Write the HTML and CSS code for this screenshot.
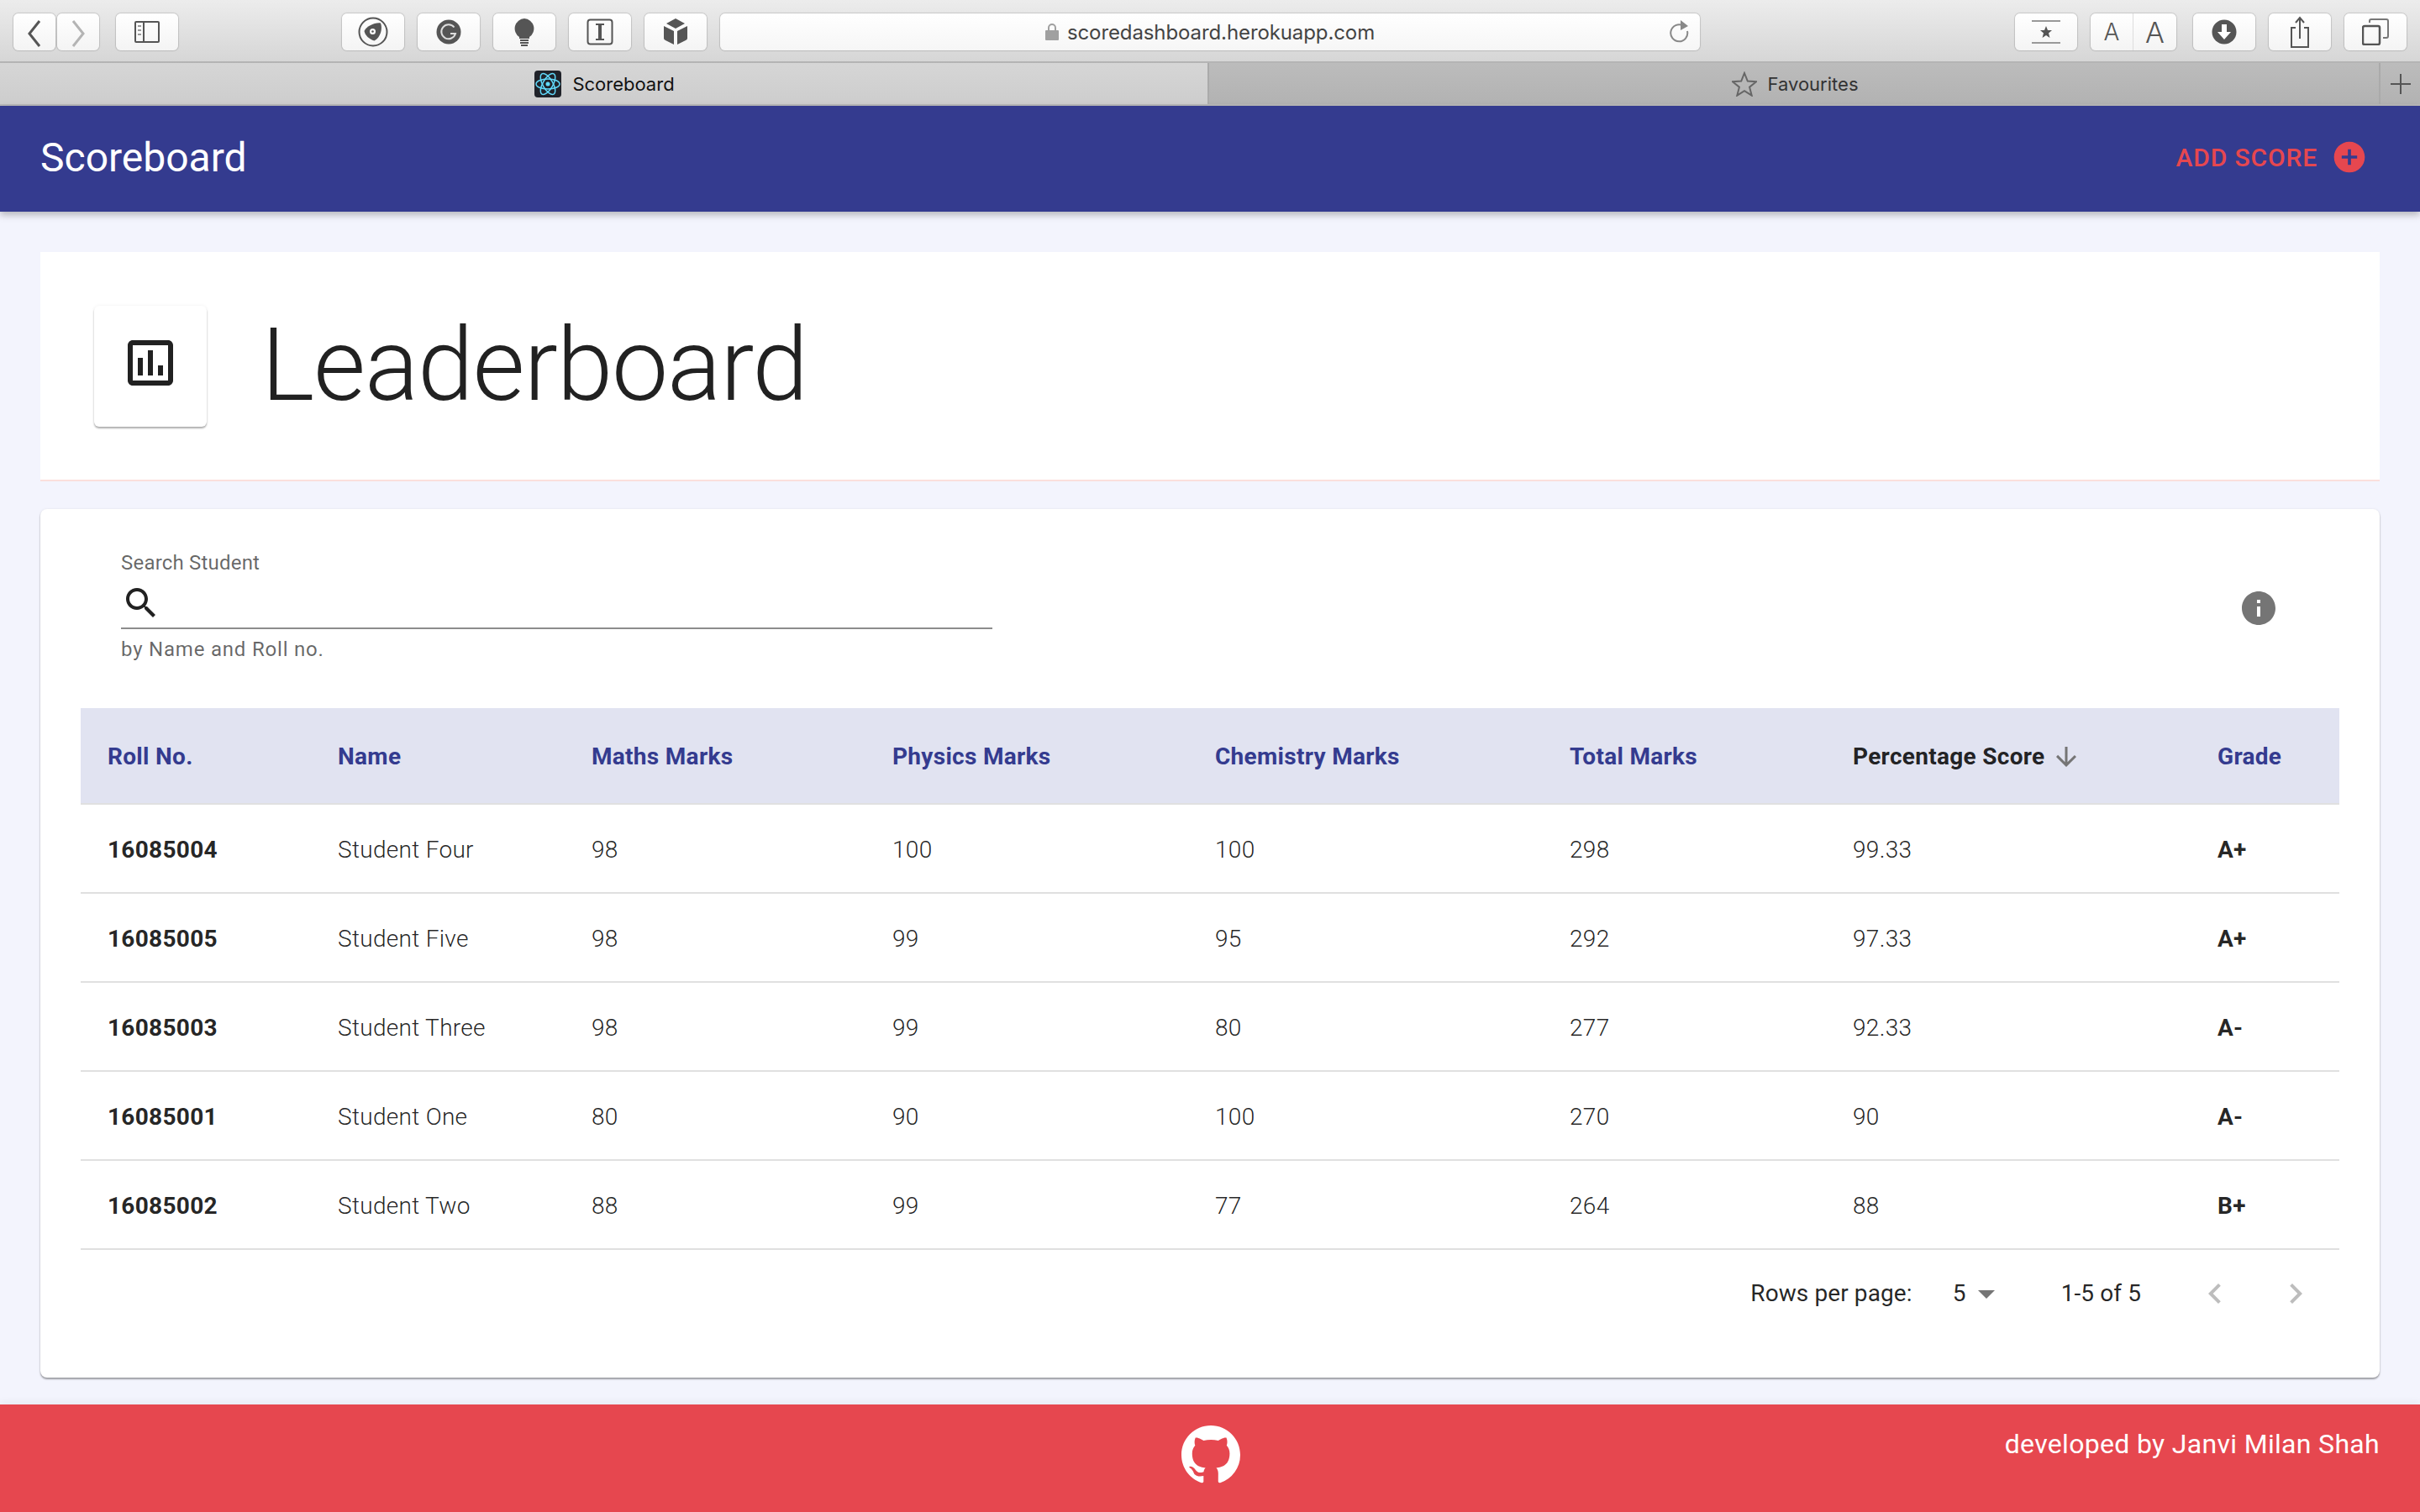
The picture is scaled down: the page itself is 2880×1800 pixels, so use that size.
FILE: index.html
```html
<!DOCTYPE html>
<html lang="en">
    <head>
        <meta charset="UTF-8" />
        <title>Scoreboard</title>
        <link rel="stylesheet" href="styles.css">
    </head>
    <body>
        <div class="toolbar">
            <div class="btn-split">
                <div class="btn btn-nav"><svg width="24" height="44" viewBox="0 0 24 44"><path d="M18 9L6 24l12 15" fill="none" stroke="#555" stroke-width="3"/></svg></div>
                <div class="btn btn-nav"><svg width="24" height="44" viewBox="0 0 24 44"><path d="M6 9l12 15L6 39" fill="none" stroke="#b4b4b4" stroke-width="3"/></svg></div>
            </div>
            <div class="btn btn-wide btn-sidebar"><svg width="30" height="26" viewBox="0 0 30 26"><rect x="1" y="1" width="28" height="24" rx="1" fill="none" stroke="#555" stroke-width="2"/><path d="M11 1v24" stroke="#555" stroke-width="2"/><path d="M4 6h4M4 11h4M4 16h4" stroke="#999" stroke-width="2"/></svg></div>
            <div class="ext-group">
                <div class="btn btn-wide"><svg width="36" height="36" viewBox="0 0 36 36"><circle cx="18" cy="18" r="16.5" fill="none" stroke="#555" stroke-width="2"/><path d="M7.500 17C10 11.500 20 6.500 27 7.500 29.500 14 27 24.500 19.500 28.500 13 26.500 8.500 22 7.500 17z" fill="#555"/><circle cx="17.500" cy="17.500" r="3.500" fill="#fff"/><circle cx="17.500" cy="17.500" r="1.300" fill="#555"/></svg></div>
                <div class="btn btn-wide"><svg width="30" height="30" viewBox="0 0 30 30"><circle cx="15" cy="15" r="14.5" fill="#555"/><path d="M21.500 9.500a8.500 8.500 0 1 0 1.500 7.500h-6" fill="none" stroke="#ddd" stroke-width="2"/></svg></div>
                <div class="btn btn-wide"><svg width="26" height="34" viewBox="0 0 26 34"><path d="M13 1a12 12 0 0 0-6 22v2h12v-2a12 12 0 0 0-6-22z" fill="#555"/><path d="M8 27h10M8 30h10M9 33h8" stroke="#555" stroke-width="2"/></svg></div>
                <div class="btn btn-wide"><svg width="32" height="32" viewBox="0 0 32 32"><rect x="1.5" y="1.5" width="29" height="29" rx="3" fill="none" stroke="#555" stroke-width="2"/><path d="M11 7h10M11 25h10" stroke="#555" stroke-width="2"/><path d="M16 7v18" stroke="#555" stroke-width="4"/></svg></div>
                <div class="btn btn-wide"><svg width="30" height="32" viewBox="0 0 30 32"><path d="M15 0l11 6-11 6L4 6z" fill="#555"/><path d="M1 9l12 6v16L3 26c-2-1-2-2-2-3z" fill="#555"/><path d="M29 9l-12 6v16l10-5c2-1 2-2 2-3z" fill="#555"/></svg></div>
            </div>
            <div class="url-bar">
                <svg class="lock" width="16" height="20" viewBox="0 0 16 20"><path d="M4 9V5a4 4 0 0 1 8 0v4" fill="none" stroke="#a0a0a0" stroke-width="2"/><rect y="8" width="16" height="12" rx="1" fill="#a0a0a0"/></svg>
                <span>scoredashboard.herokuapp.com</span>
                <svg class="reload" width="24" height="28" viewBox="0 0 24 28"><path d="M16 6.5A10 10 0 1 0 21 13" fill="none" stroke="#888" stroke-width="2"/><path d="M13 0l9 7-9 5z" fill="#888"/></svg>
            </div>
            <div class="btn btn-wide"><svg width="34" height="28" viewBox="0 0 34 28"><path d="M0 1h34M0 27h34" stroke="#999" stroke-width="2"/><path d="M17 7l2 5h5l-4 3.500 1.500 5.500-4.500-3-4.500 3L14 15.500 10 12h5z" fill="#555"/></svg></div>
            <div class="btn-text">
                <span class="btn-a-small">A</span>
                <span class="btn-a-big">A</span>
            </div>
            <div class="btn btn-wide"><svg width="30" height="30" viewBox="0 0 30 30"><circle cx="15" cy="15" r="14.500" fill="#555"/><path d="M12 6h6v9h5l-8 9-8-9h5z" fill="#fff"/></svg></div>
            <div class="btn btn-wide"><svg width="24" height="38" viewBox="0 0 24 38"><path d="M7 14H2v23h20V14h-5" fill="none" stroke="#555" stroke-width="2"/><path d="M12 27V3M7 8l5-6 5 6" fill="none" stroke="#555" stroke-width="2"/></svg></div>
            <div class="btn btn-wide"><svg width="32" height="32" viewBox="0 0 32 32"><rect x="1" y="9" width="20" height="22" rx="2" fill="none" stroke="#555" stroke-width="2.500"/><path d="M9 5V3c0-1 1-2 2-2h18c1 0 2 1 2 2v18c0 1-1 2-2 2h-4" fill="none" stroke="#777" stroke-width="2"/></svg></div>
        </div>

        <div class="tabbar">
            <div class="tab tab-active">
                <svg width="32" height="32" viewBox="0 0 32 32"><rect width="32" height="32" rx="4" fill="#20232a"/><g fill="none" stroke="#61dafb" stroke-width="1.500"><ellipse cx="16" cy="16" rx="14" ry="6"/><ellipse cx="16" cy="16" rx="14" ry="6" transform="rotate(60 16 16)"/><ellipse cx="16" cy="16" rx="14" ry="6" transform="rotate(120 16 16)"/></g><circle cx="16" cy="16" r="2.500" fill="#61dafb"/></svg>
                <span>Scoreboard</span>
            </div>
            <div class="tab tab-off">
                <svg width="30" height="30" viewBox="0 0 30 30"><path d="M15 2l3.800 9.500 10.200.7-7.900 6.500 2.600 10-8.700-5.500-8.700 5.500 2.600-10L1 12.200l10.200-.7z" fill="none" stroke="#666" stroke-width="2"/></svg>
                <span>Favourites</span>
            </div>
            <div class="tab-add"><svg width="24" height="24" viewBox="0 0 24 24"><path d="M12 0v24M0 12h24" stroke="#555" stroke-width="2"/></svg></div>
        </div>

        <header class="appbar">
            <div class="appbar-title">Scoreboard</div>
            <div class="add-score">
                <span>ADD SCORE</span>
                <svg width="44" height="44" viewBox="0 0 24 24"><path d="M12 2C6.480 2 2 6.480 2 12s4.480 10 10 10 10-4.480 10-10S17.520 2 12 2zm5 11h-4v4h-2v-4H7v-2h4V7h2v4h4v2z"/></svg>
            </div>
        </header>

        <main class="content">
            <section class="page-head">
                <div class="head-icon">
                    <svg width="72" height="72" viewBox="0 0 24 24"><path d="M19 3H5c-1.100 0-2 .9-2 2v14c0 1.100.9 2 2 2h14c1.100 0 2-.9 2-2V5c0-1.100-.9-2-2-2zm0 16H5V5h14v14zM7 10h2v7H7zm4-3h2v10h-2zm4 6h2v4h-2z"/></svg>
                </div>
                <h1>Leaderboard</h1>
            </section>

            <section class="card">
                <div class="search-row">
                    <div class="search">
                        <label>Search Student</label>
                        <div class="search-input">
                            <svg width="48" height="48" viewBox="0 0 24 24"><path d="M15.500 14h-.79l-.28-.27C15.410 12.590 16 11.110 16 9.500 16 5.910 13.090 3 9.500 3S3 5.910 3 9.500 5.910 16 9.500 16c1.610 0 3.090-.59 4.230-1.570l.27.28v.79l5 4.990L20.490 19l-4.990-5zm-6 0C7.010 14 5 11.990 5 9.500S7.010 5 9.500 5 14 7.010 14 9.500 11.990 14 9.500 14z"/></svg>
                        </div>
                        <p>by Name and Roll no.</p>
                    </div>
                    <svg class="info" width="48" height="48" viewBox="0 0 24 24"><path d="M12 2C6.480 2 2 6.480 2 12s4.480 10 10 10 10-4.480 10-10S17.520 2 12 2zm1 15h-2v-6h2v6zm0-8h-2V7h2v2z"/></svg>
                </div>

                <table>
                    <colgroup>
                        <col class="c-roll"><col class="c-name"><col class="c-maths"><col class="c-phys"><col class="c-chem"><col class="c-total"><col class="c-perc"><col class="c-grade">
                    </colgroup>
                    <thead>
                        <tr>
                            <th>Roll No.</th>
                            <th>Name</th>
                            <th>Maths Marks</th>
                            <th>Physics Marks</th>
                            <th>Chemistry Marks</th>
                            <th>Total Marks</th>
                            <th class="sorted">Percentage Score <svg width="36" height="36" viewBox="0 0 24 24"><path d="M20 12l-1.410-1.410L13 16.170V4h-2v12.170l-5.580-5.590L4 12l8 8 8-8z"/></svg></th>
                            <th>Grade</th>
                        </tr>
                    </thead>
                    <tbody>
                        <tr><td class="strong">16085004</td><td>Student Four</td><td>98</td><td>100</td><td>100</td><td>298</td><td>99.33</td><td class="strong">A+</td></tr>
                        <tr><td class="strong">16085005</td><td>Student Five</td><td>98</td><td>99</td><td>95</td><td>292</td><td>97.33</td><td class="strong">A+</td></tr>
                        <tr><td class="strong">16085003</td><td>Student Three</td><td>98</td><td>99</td><td>80</td><td>277</td><td>92.33</td><td class="strong">A-</td></tr>
                        <tr><td class="strong">16085001</td><td>Student One</td><td>80</td><td>90</td><td>100</td><td>270</td><td>90</td><td class="strong">A-</td></tr>
                        <tr><td class="strong">16085002</td><td>Student Two</td><td>88</td><td>99</td><td>77</td><td>264</td><td>88</td><td class="strong">B+</td></tr>
                    </tbody>
                </table>

                <div class="pagination">
                    <span class="rows-label">Rows per page:</span>
                    <span class="rows-select">5<svg width="48" height="48" viewBox="0 0 24 24"><path d="M7 10l5 5 5-5z"/></svg></span>
                    <span class="range">1-5 of 5</span>
                    <svg class="pager" width="48" height="48" viewBox="0 0 24 24"><path d="M15.410 7.410L14 6l-6 6 6 6 1.410-1.410L10.830 12z"/></svg>
                    <svg class="pager" width="48" height="48" viewBox="0 0 24 24"><path d="M10 6L8.590 7.410 13.170 12l-4.580 4.590L10 18l6-6z"/></svg>
                </div>
            </section>
        </main>

        <footer class="footer">
            <div></div>
            <svg class="github" width="70" height="70" viewBox="0 0 16 16"><path d="M8 0C3.580 0 0 3.580 0 8c0 3.540 2.290 6.530 5.470 7.590.4.070.55-.17.55-.38 0-.19-.01-.82-.01-1.490-2.010.37-2.530-.49-2.690-.94-.09-.23-.48-.94-.82-1.130-.28-.15-.68-.52-.01-.53.63-.01 1.080.58 1.230.82.72 1.210 1.870.87 2.330.66.070-.52.28-.87.51-1.070-1.780-.2-3.640-.89-3.640-3.950 0-.87.31-1.590.82-2.150-.08-.2-.36-1.020.08-2.120 0 0 .67-.21 2.200.82.64-.18 1.320-.27 2-.27.68 0 1.360.09 2 .27 1.530-1.040 2.200-.82 2.200-.82.44 1.100.16 1.920.08 2.120.51.56.82 1.270.82 2.150 0 3.070-1.870 3.750-3.650 3.950.29.25.54.73.54 1.480 0 1.070-.01 1.930-.01 2.200 0 .21.15.46.55.38A8.013 8.013 0 0016 8c0-4.420-3.580-8-8-8z"/></svg>
            <div class="credit">developed by Janvi Milan Shah</div>
        </footer>
    </body>
</html>
```
FILE: styles.css
```css
* {
    box-sizing: border-box;
}
body {
    font-family: Roboto, sans-serif;
    background-color: #f3f4fd;
    margin: 0;
    height: 1800px;
    display: flex;
    flex-direction: column;
    overflow: hidden;
    color: rgba(0, 0, 0, 0.87);
}

/* browser chrome */
.toolbar {
    height: 75px;
    flex: none;
    display: flex;
    align-items: flex-start;
    padding: 16px 0 0 16px;
    background: linear-gradient(#ececec, #d6d6d6);
    border-bottom: 2px solid #b4b4b4;
}
.btn {
    height: 44px;
    flex: none;
    display: flex;
    align-items: center;
    justify-content: center;
    background: linear-gradient(#ffffff, #f4f4f4);
    border-radius: 6px;
    box-shadow: 0 0 1px 1px rgba(0, 0, 0, 0.14);
}
.btn-wide {
    width: 74px;
}
.btn-split {
    display: flex;
    flex: none;
    gap: 2px;
}
.btn-nav {
    width: 50px;
}
.btn-sidebar {
    margin-left: 20px;
}
.ext-group {
    display: flex;
    flex: none;
    gap: 16px;
    margin-left: 195px;
}
.url-bar {
    width: 1166px;
    height: 44px;
    flex: none;
    margin: 0 375px 0 16px;
    display: flex;
    align-items: center;
    justify-content: center;
    gap: 10px;
    position: relative;
    font-family: Inter, sans-serif;
    font-size: 24px;
    letter-spacing: -0.1px;
    color: #444;
    background: linear-gradient(#ffffff, #f6f6f6);
    border-radius: 6px;
    box-shadow: 0 0 1px 1px rgba(0, 0, 0, 0.14);
}
.reload {
    position: absolute;
    right: 12px;
    top: 8px;
}
.btn-text {
    width: 102px;
    height: 44px;
    flex: none;
    margin: 0 20px 0 16px;
    display: flex;
    background: linear-gradient(#ffffff, #f4f4f4);
    border-radius: 6px;
    box-shadow: 0 0 1px 1px rgba(0, 0, 0, 0.14);
    font-family: Inter, sans-serif;
    font-weight: 300;
    color: #555;
}
.btn-text span {
    display: flex;
    align-items: center;
    justify-content: center;
}
.btn-a-small {
    width: 51px;
    font-size: 28px;
    border-right: 1px solid #ddd;
}
.btn-a-big {
    width: 51px;
    font-size: 34px;
}
.btn-text + .btn,
.btn-text + .btn + .btn {
    margin-right: 16px;
}
.tabbar {
    height: 51px;
    flex: none;
    display: flex;
    font-family: Inter, sans-serif;
    font-size: 22px;
    border-bottom: 2px solid #b8b8b8;
}
.tab {
    display: flex;
    align-items: center;
    justify-content: center;
    gap: 13px;
    padding-left: 2px;
}
.tab-active {
    width: 1439px;
    color: #111;
    background: linear-gradient(#d6d6d6, #cdcdcd);
    border-right: 2px solid #aaa;
}
.tab-off {
    flex: 1;
    color: #333;
    background: linear-gradient(#bcbcbc, #b2b2b2);
}
.tab-add {
    width: 49px;
    display: flex;
    align-items: center;
    justify-content: center;
    background: linear-gradient(#bcbcbc, #b2b2b2);
    border-left: 2px solid #aaa;
}

/* app */
.appbar {
    height: 126px;
    flex: none;
    display: flex;
    align-items: center;
    justify-content: space-between;
    padding: 0 16px 4px 48px;
    background-color: #343b8f;
    box-shadow: 0 4px 8px rgba(0, 0, 0, 0.25);
    position: relative;
}
.appbar-title {
    font-size: 48px;
    color: #fff;
}
.add-score {
    display: flex;
    align-items: center;
    gap: 16px;
    margin-right: 46px;
    font-size: 30px;
    font-weight: 500;
    letter-spacing: 0.86px;
    color: #e6474f;
    fill: #e6474f;
}
.content {
    flex: 1;
    padding: 48px 48px 0;
    display: flex;
    flex-direction: column;
    gap: 33px;
}
.page-head {
    height: 273px;
    padding: 8px 64px 0;
    display: flex;
    align-items: center;
    gap: 65px;
    background-color: #fff;
    border-bottom: 2px solid #fbdfdc;
}
.head-icon {
    width: 134px;
    height: 144px;
    margin-top: -8px;
    padding-bottom: 7px;
    display: flex;
    align-items: center;
    justify-content: center;
    fill: #212121;
    border-radius: 6px;
    box-shadow: 0 2px 2px rgba(0, 0, 0, 0.3), 0 0 4px rgba(0, 0, 0, 0.06);
}
h1 {
    margin: -10px 0 0;
    font-size: 120px;
    font-weight: 300;
    line-height: 1;
    letter-spacing: -1.2px;
}
.card {
    height: 1034px;
    padding: 0 48px;
    background-color: #fff;
    border-radius: 8px;
    box-shadow: 0 2px 2px rgba(0, 0, 0, 0.35), 0 0 3px rgba(0, 0, 0, 0.08);
}
.search-row {
    height: 237px;
    padding: 50px 72px 0 48px;
    display: flex;
    justify-content: space-between;
    align-items: flex-start;
}
.search {
    width: 1037px;
}
.search label {
    display: block;
    font-size: 24px;
    line-height: 28px;
    letter-spacing: 0.2px;
    color: rgba(0, 0, 0, 0.6);
}
.search-input {
    height: 65px;
    padding-top: 10px;
    border-bottom: 2px solid #8c8c8c;
    fill: #212121;
}
.search p {
    margin: 10px 0 0;
    font-size: 24px;
    line-height: 28px;
    letter-spacing: 0.8px;
    color: rgba(0, 0, 0, 0.6);
}
.info {
    margin-top: 44px;
    fill: #757575;
}
table {
    width: 2688px;
    border-collapse: collapse;
    table-layout: fixed;
}
.c-roll { width: 274px; }
.c-name { width: 302px; }
.c-maths { width: 358px; }
.c-phys { width: 384px; }
.c-chem { width: 422px; }
.c-total { width: 337px; }
.c-perc { width: 434px; }
.c-grade { width: 177px; }
th,
td {
    padding: 2px 0 0 32px;
    text-align: left;
    font-size: 28px;
    letter-spacing: 0.3px;
}
th {
    height: 114px;
    font-weight: 700;
    color: #343b8f;
    background-color: #e1e3f1;
    border-bottom: 2px solid #e0e0e0;
}
th.sorted {
    color: rgba(0, 0, 0, 0.87);
}
th.sorted svg {
    vertical-align: -9px;
    fill: #757575;
}
td {
    height: 106px;
    font-weight: 300;
    border-bottom: 2px solid #e0e0e0;
}
td.strong {
    font-weight: 700;
}
.pagination {
    height: 104px;
    display: flex;
    align-items: center;
    justify-content: flex-end;
    font-size: 28px;
    letter-spacing: 0.1px;
    padding: 0 28px 1px 0;
}
.rows-select {
    display: flex;
    align-items: center;
    margin-left: 48px;
    fill: #757575;
    width: 100px;
}
.range {
    margin-left: 29px;
    margin-right: 64px;
}
.pager {
    fill: #bdbdbd;
    margin-left: 48px;
}
.pager:first-of-type {
    margin-left: 0;
}
.footer {
    height: 128px;
    flex: none;
    display: grid;
    grid-template-columns: 1fr 70px 1fr;
    align-items: start;
    padding: 25px 48px 0;
    background-color: #e6474f;
    box-shadow: 0 -4px 8px rgba(0, 0, 0, 0.04);
    position: relative;
}
.github {
    fill: #fff;
    margin-left: 1px;
}
.credit {
    padding-top: 3px;
    text-align: right;
    font-size: 32px;
    letter-spacing: 0.32px;
    color: #fff;
}
```
